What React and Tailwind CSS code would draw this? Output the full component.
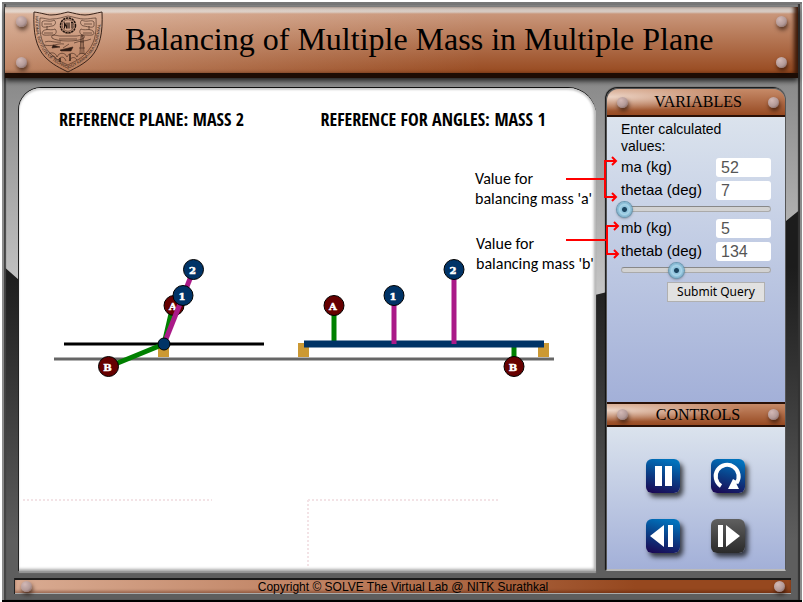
import { useState } from "react";

const SERIF = "font-['Liberation_Serif','Times_New_Roman',serif]";

function Rivet() {
  return (
    <span className="block size-[11px] shrink-0 rounded-full bg-[radial-gradient(circle_at_35%_30%,#d3b9b6,#b39a98_55%,#6d5450)] shadow-[1px_3px_4px_rgba(30,10,0,0.65)]" />
  );
}

function Emblem() {
  return (
    <svg viewBox="0 0 70 62" className="h-[62px] w-[70px] shrink-0" fill="none" stroke="#3a241a" strokeWidth="0.6" role="img" aria-label="NITK emblem">
      <path d="M1 1 C9 2 14 4 18 4 C25 4 30 2 35 1 C41 2 46 4 52 4 C57 4 63 2 69 1 C70 22 67 36 58 46 C50 54 42 57 35 61 C27 57 20 54 12 46 C3 36 0 22 1 1Z" strokeWidth="1" />
      <path d="M7 7 C13 7 15 9 19 8 C26 8 30 6 35 5 C41 6 46 8 51 8 C56 8 59 7 63 7 C64 24 61 34 53 42 C47 49 40 51 35 54 C29 51 23 49 17 42 C9 34 6 24 7 7Z" />
      <path id="emblem-band" d="M2.5 5 C2 22 5 35 14 44.500 C21 52 28 54 35 58 C42 54 49 52 56 44.500 C65 35 68 22 67.500 5" stroke="none" />
      <text fontSize="4" fill="#2a1a14" stroke="none" className="font-['Liberation_Sans',sans-serif]">
        <textPath href="#emblem-band">NATIONAL INSTITUTE OF TECHNOLOGY KARNATAKA SURATHKAL</textPath>
      </text>
      <circle cx="35" cy="14.500" r="7.500" stroke="#20130d" strokeWidth="1.500" strokeDasharray="2.400 0.600" />
      <circle cx="35" cy="14.500" r="5.800" />
      <path d="M31.500 17.500V11.500L34 17.500V11.500M36 11.500V17.500M38 11.500H40M39 11.500V17.500" stroke="#20130d" strokeWidth="1.100" />
      <path d="M9 11C11 8 17 12 21 9C24 11 22 15 19 15C14 16 10 17 9 15ZM11 13H19M10 20C14 17 18 20 22 18C25 21 22 25 18 24C14 24 9 25 9 22ZM11 22H20M14 15V19" />
      <path d="M61 11C59 8 53 12 49 9C46 11 48 15 51 15C56 16 60 17 61 15ZM51 13H59M60 20C56 17 52 20 48 18C45 21 48 25 52 24C56 24 61 25 61 22ZM50 22H59M56 15V19" />
      <path d="M19 27C24 31 46 31 51 27M19 27C17 22 25 25 27 25H43C46 25 53 22 51 27M26 28H44" />
      <path d="M12 31C17 29 21 32 28 31M11 34C20 36 24 32 31 33M41 32C48 29 52 31 58 28" />
      <path d="M27 39L40 36L38 40H28ZM30 37L36 33M20 34L27 36L19 37Z" fill="#2a1a14" />
      <path d="M49 24V43M47 43L48 25H50L51 43M47 31H51M46 37H52" />
      <path d="M15 44C18 40 23 42 24 46C26 41 32 41 34 46C36 41 42 41 44 46C46 41 51 42 53 44M18 46C20 44 22 45 23 48M25 49C28 45 31 45 33 50M36 50C39 45 42 46 44 49" />
      <path d="M37 43V50M27 47V51" strokeWidth="1.500" />
    </svg>
  );
}

function Mass({ x, y, label, blue }) {
  return (
    <g>
      <circle cx={x} cy={y} r="10" fill={blue ? "#003366" : "#660000"} stroke="#000" />
      <text x={x - 1} y={y + 4} textAnchor="middle" fontSize="10" fill="#fff" stroke="#fff" strokeWidth="0.5" className="font-['DejaVu_Serif',serif] font-bold">
        {label}
      </text>
    </g>
  );
}

function Diagram() {
  return (
    <svg viewBox="19 140 577 430" className="pointer-events-none relative z-10 block w-full overflow-visible" fill="none">
      <g stroke="#f3e3e6" strokeWidth="2" strokeDasharray="2 2">
        <path d="M23 500H212" />
        <path d="M308 500H499" />
        <path d="M308 500V567" />
      </g>

      <path d="M54 359H554" stroke="#666" strokeWidth="3" />
      <path d="M158 344h11v13h-11zM298 343h11v14h-11zM538 343h11v14h-11z" fill="#cc9933" />

      <path d="M64 344H264" stroke="#000" strokeWidth="3" />
      <path d="M164 344L108 367M164 344L173 305" stroke="#008000" strokeWidth="5" />
      <Mass x={108.5} y={366.5} label="B" />
      <Mass x={174} y={305.5} label="A" />
      <path d="M164 344L193.500 270" stroke="#aa1a88" strokeWidth="5" />
      <Mass x={193.5} y={269.5} label="2" blue />
      <Mass x={183} y={295.5} label="1" blue />
      <circle cx="164" cy="344" r="6" fill="#003366" stroke="#000" />

      <path d="M334 344V305M514 344V367" stroke="#008000" strokeWidth="5" />
      <path d="M304 344H544" stroke="#003366" strokeWidth="7" />
      <path d="M394 344V296M454 344V270" stroke="#aa1a88" strokeWidth="5" />
      <Mass x={334} y={305.5} label="A" />
      <Mass x={394} y={295.5} label="1" blue />
      <Mass x={454} y={269.5} label="2" blue />
      <Mass x={514} y={366.5} label="B" />

      <g fontSize="16" fill="#000" className="font-['Carlito','Lato',sans-serif]">
        <text x="475" y="184">Value for</text>
        <text x="475" y="204">balancing mass 'a'</text>
        <text x="476" y="249">Value for</text>
        <text x="476" y="269">balancing mass 'b'</text>
      </g>

      <g stroke="#ff0000" strokeWidth="2">
        <path d="M566 179H605M616 161H605V197H616M612 157L616 161L612 165M612 193L616 197L612 201" />
        <path d="M566 240H607M618 226H607V254H618M614 222L618 226L614 230M614 250L618 254L614 258" />
      </g>
    </svg>
  );
}

function PanelTitle({ children, first }) {
  return (
    <div
      className={
        "flex items-center justify-between border-b-2 border-[#2a1006] bg-[radial-gradient(ellipse_at_0%_30%,rgba(255,245,238,0.75),transparent_55%),linear-gradient(#c68a68,#974a22)] pl-[10px] pr-[6px] " +
        (first ? "h-[28px] rounded-t-[12px]" : "h-[25px] border-t-2 border-t-[#2a1006]")
      }
    >
      <Rivet />
      <h2 className={`${SERIF} text-base leading-5 text-black`}>{children}</h2>
      <Rivet />
    </div>
  );
}

function NumberRow({ id, label, value, onChange }) {
  return (
    <div className="flex h-[23px] items-start justify-between">
      <label htmlFor={id} className="text-[15px] leading-[17px]">{label}</label>
      <input
        id={id}
        value={value}
        onChange={(e) => onChange(e.target.value)}
        className="h-[19px] w-[55px] rounded-[3px] bg-white px-[5px] text-base leading-[19px] text-[#555] outline-none"
      />
    </div>
  );
}

function AngleSlider({ label, value, onChange }) {
  return (
    <div className="flex h-[15px] items-start pt-[2px]">
      <div className="flex h-[6px] w-full items-center rounded-full border border-[#aaa] border-t-[#888] bg-[#d2d2d2]">
        <input
          type="range"
          aria-label={label}
          min="0"
          max="360"
          value={value}
          onChange={(e) => onChange(e.target.value)}
          className="-mx-[8px] h-[16px] w-[calc(100%+16px)] shrink-0 appearance-none bg-transparent [&::-webkit-slider-thumb]:size-[15px] [&::-webkit-slider-thumb]:appearance-none [&::-webkit-slider-thumb]:rounded-full [&::-webkit-slider-thumb]:bg-[radial-gradient(circle,#1c4560_0_2px,#8fc3dc_3px,#a9d4e8_5px,#7fb5d0_7px)] [&::-webkit-slider-thumb]:shadow-[0_0_0_1px_#6c9ab3,0_1px_3px_rgba(0,0,0,0.5)]"
        />
      </div>
    </div>
  );
}

function ControlButton({ label, disabled, children }) {
  return (
    <button
      type="button"
      aria-label={label}
      disabled={disabled}
      className={
        "size-[34px] rounded-[6px] shadow-[3px_4px_5px_rgba(0,0,0,0.7)] " +
        (disabled ? "bg-linear-to-b from-[#606060] to-[#2b2b2b]" : "bg-linear-[195deg] from-[#0072bc] from-10% via-[#0a4088] via-50% to-[#1b0a55] to-95%")
      }
    >
      <svg viewBox="0 0 34 34" className="size-[34px]" fill="#fff">{children}</svg>
    </button>
  );
}

export default function App() {
  const [ma, setMa] = useState("52");
  const [thetaA, setThetaA] = useState("7");
  const [mb, setMb] = useState("5");
  const [thetaB, setThetaB] = useState("134");

  return (
    <div className="flex min-h-screen flex-col bg-white pl-[2px] pr-px pt-[2px] font-['Liberation_Sans',Arial,sans-serif] text-black">
      <div className="relative isolate flex flex-1 flex-col border-t-2 border-b-2 border-t-[#777] border-b-black bg-linear-to-b from-[#858585] from-10% to-[#c8c8c8] to-50% pb-[6px] pl-[3px] pr-[4px] pt-[3px]">
        <div className="absolute inset-x-0 bottom-0 top-[204px] -z-10 bg-linear-to-b from-[#1c1c1c] from-15% to-[#5e5e5e] to-85% [clip-path:polygon(0_57px,17px_72px,calc(100%-207px)_87px,calc(100%-195px)_84px,calc(100%-16px)_13px,100%_0,100%_100%,0_100%)]" />
        <div className="pointer-events-none absolute inset-0 -z-10 border-x-2 border-[#8c8c8c] shadow-[inset_2px_0_1px_#444,inset_-2px_0_1px_#333]" />

        <header className="flex h-[71px] shrink-0 items-center border-b-[5px] border-[#1d0c04] bg-[linear-gradient(90deg,rgba(255,235,220,0.35),transparent_60%),linear-gradient(#dcd3cd_0,#d5c8c0_5px,#c9967a_7px,#984a20_100%)] px-[11px] shadow-[inset_-5px_0_4px_-1px_#3a1808,0_3px_5px_rgba(0,0,0,0.75)]">
          <div className="flex h-full flex-col justify-between pb-[5px] pt-[9px]">
            <Rivet />
            <Rivet />
          </div>
          <div className="ml-[6px] pt-[3px]"><Emblem /></div>
          <h1 className={`${SERIF} flex-1 pb-[2px] pl-[22px] text-[32px] leading-9`}>
            Balancing of Multiple Mass in Multiple Plane
          </h1>
          <div className="flex h-full flex-col justify-between pb-[5px] pt-[9px]">
            <Rivet />
            <Rivet />
          </div>
        </header>

        <main className="mt-[10px] flex flex-1 items-stretch gap-[10px] pl-[14px] pr-[12px]">
          <section className="min-w-0 flex-1 rounded-tl-[22px] rounded-tr-[28px] bg-white shadow-[0_-1px_0_#111,-1px_0_0_#222,inset_0_2px_2px_#ccc,inset_-2px_-2px_3px_#aaa,0_2px_1px_#999]">
            <div className="flex h-[52px] items-center pt-[10px] font-['Open_Sans_Condensed','Roboto_Condensed','Carlito','Lato',sans-serif] text-lg font-bold leading-6">
              <h2 className="w-1/2 whitespace-nowrap pl-[40px]">REFERENCE PLANE: MASS 2</h2>
              <h2 className="w-1/2 whitespace-nowrap pl-[13px]">REFERENCE FOR ANGLES: MASS 1</h2>
            </div>
            <Diagram />
          </section>

          <aside className="flex w-[180px] shrink-0 flex-col rounded-t-[12px] border border-[#555] border-b-2 border-b-[#bbb] shadow-[-1px_-1px_1px_#111]">
            <PanelTitle first>VARIABLES</PanelTitle>
            <form className="flex flex-1 flex-col bg-linear-to-b from-[#dbe3ed] to-[#a3b0d8] px-[14px] pt-[4px]" onSubmit={(e) => e.preventDefault()}>
              <p className="pb-[3px] pr-[30px] text-sm leading-[17px]">Enter calculated values:</p>
              <NumberRow id="ma" label="ma (kg)" value={ma} onChange={setMa} />
              <NumberRow id="thetaa" label="thetaa (deg)" value={thetaA} onChange={setThetaA} />
              <AngleSlider label="thetaa" value={thetaA} onChange={setThetaA} />
              <NumberRow id="mb" label="mb (kg)" value={mb} onChange={setMb} />
              <NumberRow id="thetab" label="thetab (deg)" value={thetaB} onChange={setThetaB} />
              <AngleSlider label="thetab" value={thetaB} onChange={setThetaB} />
              <button type="submit" className="mr-[6px] mt-[2px] h-[20px] w-[98px] self-end border border-[#b0b0b0] bg-[#e1e1e1] font-['Noto_Sans',sans-serif] text-xs leading-4">
                Submit Query
              </button>
            </form>
            <PanelTitle>CONTROLS</PanelTitle>
            <div className="grid h-[142px] grid-cols-[34px_34px] content-start justify-center gap-x-[31px] gap-y-[26px] bg-linear-to-b from-[#dbe3ed] to-[#a3b0d8] pr-[2px] pt-[32px]">
              <ControlButton label="Pause">
                <path d="M9 7h7v20H9zM19 7h7v20h-7z" />
              </ControlButton>
              <ControlButton label="Restart">
                <path d="M10 27A11.500 11.500 0 1 1 25.500 24" fill="none" stroke="#fff" strokeWidth="4" />
                <path d="M17 30H28L25.500 25L27 23L22 20Z" />
              </ControlButton>
              <ControlButton label="Previous">
                <path d="M4 17L18 6V28zM22 6h5v22h-5z" />
              </ControlButton>
              <ControlButton label="Next" disabled>
                <path d="M7 6h5v22H7zM15 6L29 17L15 28z" />
              </ControlButton>
            </div>
          </aside>
        </main>

        <footer className="ml-[10px] mr-[7px] mt-[7px] flex h-[16px] items-center justify-between border-b border-t-2 border-t-[#1a1a1a] border-b-[#aaa] bg-[linear-gradient(90deg,#d9ab92_0,#be8060_40%,#96481f_80%)] px-[6px] shadow-[-1px_0_0_#222,inset_0_-2px_3px_rgba(70,20,0,0.4)]">
          <Rivet />
          <p className="text-xs leading-3">Copyright © SOLVE The Virtual Lab @ NITK Surathkal</p>
          <Rivet />
        </footer>
      </div>
    </div>
  );
}
